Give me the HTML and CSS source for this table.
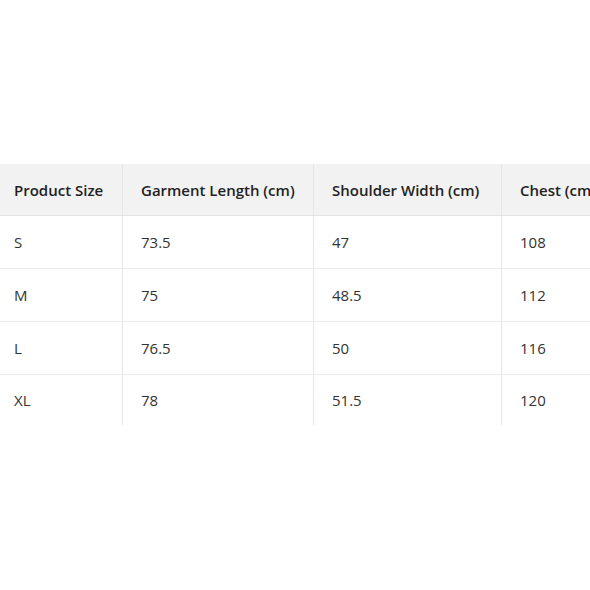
FILE: index.html
```html
<!DOCTYPE html>
<html>
<head>
<meta charset="utf-8">
<link rel="stylesheet" href="styles.css">
</head>
<body>
<div class="wrap">
<table class="size-table">
  <thead>
    <tr><th>Product Size</th><th>Garment Length (cm)</th><th>Shoulder Width (cm)</th><th>Chest (cm)</th></tr>
  </thead>
  <tbody>
    <tr><td>S</td><td>73.5</td><td>47</td><td>108</td></tr>
    <tr><td>M</td><td>75</td><td>48.5</td><td>112</td></tr>
    <tr><td>L</td><td>76.5</td><td>50</td><td>116</td></tr>
    <tr><td>XL</td><td>78</td><td>51.5</td><td>120</td></tr>
  </tbody>
</table>
</div>
</body>
</html>
```
FILE: styles.css
```css
html, body { margin: 0; padding: 0; background: #fff; }
body { overflow: hidden; width: 590px; height: 590px; }
.wrap { padding-top: 164px; margin-left: -4px; width: 900px; }
.size-table {
  border-collapse: collapse;
  table-layout: fixed;
  font-family: "Open Sans", "Noto Sans", sans-serif;
  font-size: 15px;
  color: #333;
}
.size-table th, .size-table td {
  text-align: left;
  padding: 0 0 0 18px;
  border-left: 1px solid #e6e6e6;
  white-space: nowrap;
}
.size-table th:first-child, .size-table td:first-child { border-left: none; }
.size-table th {
  background: #f2f2f2;
  font-weight: 600;
  color: #222;
  height: 51px;
  border-bottom: 1px solid #e3e3e3;
}
.size-table td { height: 52px; border-bottom: 1px solid #ebebeb; }
.size-table tbody tr:last-child td { border-bottom: none; height: 50px; }
.size-table th:nth-child(1) { width: 108px; }
.size-table th:nth-child(2) { width: 172px; }
.size-table th:nth-child(3) { width: 169px; }
.size-table th:nth-child(4) { width: 160px; }
```
